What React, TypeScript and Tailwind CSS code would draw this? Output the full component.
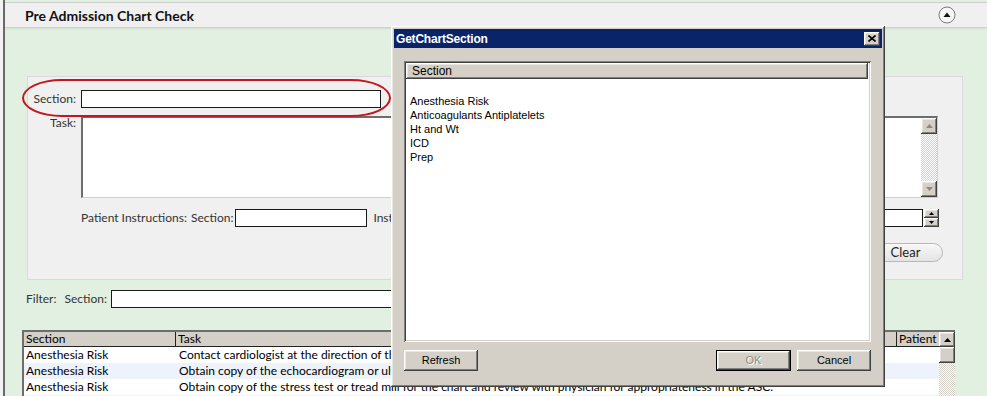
import React from "react";

const raised =
  "shadow-[inset_-1px_-1px_#404040,inset_1px_1px_#ffffff,inset_-2px_-2px_#808080,inset_2px_2px_#e8e6e0]";
const sunken =
  "shadow-[inset_1px_1px_#808080,inset_-1px_-1px_#ffffff,inset_2px_2px_#404040,inset_-2px_-2px_#d4d0c8]";
const checker =
  "bg-[repeating-conic-gradient(#ffffff_0_25%,#d4d0c8_0_50%)] bg-[length:2px_2px]";

function Tri({ up = true, color = "#000" }: { up?: boolean; color?: string }) {
  return (
    <svg width="7" height="4" viewBox="0 0 7 4">
      {up ? (
        <polygon points="0,4 7,4 3.5,0" fill={color} />
      ) : (
        <polygon points="0,0 7,0 3.5,4" fill={color} />
      )}
    </svg>
  );
}

function SmallTri({ up = true }: { up?: boolean }) {
  return (
    <svg width="5" height="3" viewBox="0 0 5 3">
      {up ? <polygon points="0,3 5,3 2.5,0" fill="#000" /> : <polygon points="0,0 5,0 2.5,3" fill="#000" />}
    </svg>
  );
}

function CircleUp() {
  return (
    <svg width="18" height="18" viewBox="0 0 18 18">
      <circle cx="9" cy="9" r="8" fill="#f6f6f6" stroke="#7a7a7a" strokeWidth="1" />
      <polygon points="5.5,11 12.5,11 9,6.5" fill="#111" />
    </svg>
  );
}

const rows = [
  ["Anesthesia Risk", "Contact cardiologist at the direction of the physician for clearance prior to the procedure.", "bg-white"],
  ["Anesthesia Risk", "Obtain copy of the echocardiogram or ultrasound for the chart and review with physician.", "bg-[#edf2fb]"],
  ["Anesthesia Risk", "Obtain copy of the stress test or tread mill for the chart and review with physician for appropriateness in the ASC.", "bg-white"],
  ["Anesthesia Risk", "Obtain copy of the EKG for the chart.", "bg-[#edf2fb]"],
];

const sections = ["Anesthesia Risk", "Anticoagulants Antiplatelets", "Ht and Wt", "ICD", "Prep"];

export default function App() {
  return (
    <div className="relative w-[987px] h-[396px] overflow-hidden bg-[#f2f2f2] font-['Lato',sans-serif] text-[12px] text-black">
      <div className="ml-[3px] h-full border-l-2 border-[#6a6a6a] bg-[#e2f0e2] flex flex-col">
        {/* top bar */}
        <div className="mt-[2px] h-[26px] shrink-0 bg-[#f0f0f0] border-y border-[#cfcfcf] flex items-center justify-between pl-[20px] pr-[31px] shadow-[0_1px_2px_rgba(0,0,0,0.08)]">
          <span className="font-bold text-[14px] text-[#111]">Pre Admission Chart Check</span>
          <CircleUp />
        </div>

        {/* panel */}
        <div className="mt-[48px] ml-[22px] mr-[24px] h-[204px] shrink-0 border border-[#d9d9d9] bg-[#f0f0f0] flex flex-col">
          <div className="mt-[13px] flex items-center h-[18px]">
            <span className="w-[48px] text-right text-[#333]">Section:</span>
            <div className="ml-[5px] w-[300px] h-[18px] bg-white border border-[#1a1a1a]" />
          </div>
          <div className="mt-[8px] flex items-start pr-[24px]">
            <span className="w-[48px] text-right text-[#333] leading-[14px]">Task:</span>
            <div className="ml-[5px] flex-1 h-[82px] bg-white flex justify-end border-l-2 border-t-2 border-[#6d6d6d] border-b border-r border-b-[#d0d0d0] border-r-[#d0d0d0]">
              <div className="w-[16px] h-full flex flex-col">
                <div className={`h-[16px] bg-[#d4d0c8] flex items-center justify-center ${raised}`}>
                  <Tri up color="#8a8a8a" />
                </div>
                <div className={`flex-1 ${checker}`} />
                <div className={`h-[16px] bg-[#d4d0c8] flex items-center justify-center ${raised}`}>
                  <Tri up={false} color="#8a8a8a" />
                </div>
              </div>
            </div>
          </div>
          <div className="mt-[11px] flex items-center h-[18px] pl-[53px] pr-[23px] text-[#333]">
            <span>Patient Instructions:</span>
            <span className="ml-[4px]">Section:</span>
            <div className="ml-[2px] w-[132px] h-[18px] bg-white border border-[#1a1a1a]" />
            <span className="ml-[6px]">Instructions:</span>
            <div className="ml-[4px] flex-1 h-[18px] bg-white border border-[#1a1a1a]" />
            <div className="ml-[1px] w-[15px] h-[18px] flex flex-col">
              <div className={`h-[9px] bg-[#d4d0c8] flex items-center justify-center ${raised}`}>
                <SmallTri up />
              </div>
              <div className={`h-[9px] bg-[#d4d0c8] flex items-center justify-center ${raised}`}>
                <SmallTri up={false} />
              </div>
            </div>
          </div>
          <div className="mt-[16px] flex justify-end pr-[19px]">
            <div className="w-[75px] h-[19px] rounded-full border border-[#b8b8b8] bg-[linear-gradient(#f8f8f8,#e4e4e4)] flex items-center justify-center text-[13px] text-[#222]">
              Clear
            </div>
          </div>
        </div>

        {/* filter */}
        <div className="mt-[10px] ml-[21px] flex items-center h-[18px] shrink-0 text-[#333]">
          <span>Filter:</span>
          <span className="ml-[8px]">Section:</span>
          <div className="ml-[4px] w-[480px] h-[18px] bg-white border border-[#1a1a1a]" />
        </div>

        {/* table */}
        <div className="mt-[22px] ml-[17px] w-[933px] flex-1 min-h-0 border-l-2 border-t-2 border-l-[#6d6d6d] border-t-[#6d6d6d] bg-white flex overflow-hidden">
          <div className="flex-1 flex flex-col">
            <div className="h-[15px] shrink-0 bg-[#d4d0c8] flex border-b border-[#222] leading-[14px]">
              <div className="w-[152px] pl-[2px] border-r border-[#222]">Section</div>
              <div className="flex-1 pl-[2px] border-r border-[#222]">Task</div>
              <div className="w-[42px] pl-[2px] whitespace-nowrap">Patient</div>
            </div>
            {rows.map((r, i) => (
              <div key={i} className={`h-[16px] shrink-0 flex items-center whitespace-nowrap overflow-hidden ${r[2]}`}>
                <div className="w-[152px] pl-[2px] shrink-0">{r[0]}</div>
                <div className="flex-1 pl-[3px] overflow-hidden">{r[1]}</div>
              </div>
            ))}
          </div>
          <div className="w-[16px] flex flex-col">
            <div className={`h-[15px] shrink-0 bg-[#d4d0c8] flex items-center justify-center ${raised}`}>
              <Tri up />
            </div>
            <div className={`h-[16px] shrink-0 bg-[#d4d0c8] ${raised}`} />
            <div className={`flex-1 ${checker}`} />
          </div>
        </div>
      </div>

      {/* red highlight oval */}
      <div className="absolute left-[22px] top-[79px] w-[369px] h-[38px] rounded-[40px/19px] border-2 border-[#c4161c]" />

      {/* dialog */}
      <div className={`absolute left-[391px] top-[26px] w-[494px] h-[361px] bg-[#d4d0c8] p-[3px] flex flex-col font-['Liberation_Sans',Arial,sans-serif] text-[11px] ${raised}`}>
        <div className="h-[19px] shrink-0 bg-[#0a246a] flex items-center justify-between pl-[2px] pr-[2px]">
          <span className="text-white font-bold text-[12px] tracking-[-0.2px]">GetChartSection</span>
          <div className={`w-[16px] h-[14px] bg-[#d4d0c8] flex items-center justify-center ${raised}`}>
            <svg width="8" height="7" viewBox="0 0 8 7">
              <path d="M0.5 0.5 L7.5 6.5 M7.5 0.5 L0.5 6.5" stroke="#000" strokeWidth="1.6" />
            </svg>
          </div>
        </div>
        <div className={`mt-[13px] ml-[10px] mr-[11px] h-[281px] shrink-0 bg-white p-[2px] flex flex-col ${sunken}`}>
          <div className={`h-[16px] shrink-0 bg-[#d4d0c8] mr-[1px] pl-[6px] flex items-center text-[12px] ${raised}`}>
            Section
          </div>
          <div className="pt-[15px] pl-[4px] flex flex-col text-[11px] leading-[14px]">
            {sections.map((s) => (
              <div key={s}>{s}</div>
            ))}
          </div>
        </div>
        <div className="mt-[8px] ml-[10px] mr-[11px] flex items-center">
          <div className={`w-[74px] h-[21px] bg-[#d4d0c8] flex items-center justify-center ${raised}`}>Refresh</div>
          <div className="flex-1" />
          <div className="w-[75px] h-[21px] border border-black flex">
            <div className={`flex-1 bg-[#d4d0c8] flex items-center justify-center text-[#8c8a85] [text-shadow:1px_1px_#ffffff] ${raised}`}>OK</div>
          </div>
          <div className={`ml-[6px] w-[74px] h-[21px] bg-[#d4d0c8] flex items-center justify-center ${raised}`}>Cancel</div>
        </div>
      </div>
    </div>
  );
}
